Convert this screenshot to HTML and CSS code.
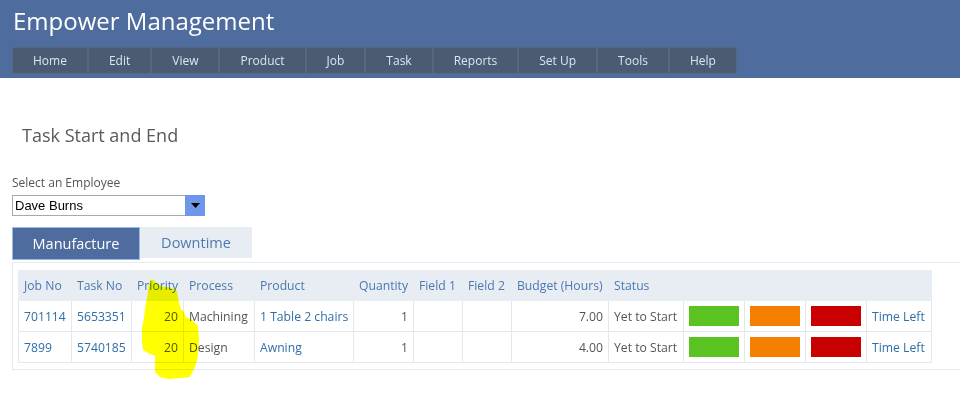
FILE: index.html
```html
<!DOCTYPE html>
<html>
<head>
<meta charset="utf-8">
<link rel="stylesheet" href="styles.css">
</head>
<body>
<header class="top">
  <h1 class="brand">Empower Management</h1>
  <nav class="menu">
    <a>Home</a><a>Edit</a><a>View</a><a>Product</a><a>Job</a><a>Task</a><a>Reports</a><a>Set Up</a><a>Tools</a><a>Help</a>
  </nav>
</header>
<main class="page">
  <h2 class="title">Task Start and End</h2>
  <label class="lbl">Select an Employee</label>
  <div class="select">
    <span class="sel-text">Dave Burns</span>
    <span class="sel-btn"><svg width="9" height="5" viewBox="0 0 9 5"><path d="M0 0h9L4.5 5z" fill="#000"/></svg></span>
  </div>
  <div class="tabs">
    <div class="tab active">Manufacture</div>
    <div class="tab">Downtime</div>
  </div>
  <div class="panel">
    <table class="grid">
      <colgroup>
        <col class="c53"><col class="c60"><col class="c52"><col class="c71"><col class="c99"><col class="c60"><col class="c49"><col class="c49"><col class="c97"><col class="c75"><col class="c61"><col class="c61"><col class="c61"><col class="c65">
      </colgroup>
      <thead>
        <tr><th>Job No</th><th>Task No</th><th>Priority</th><th>Process</th><th>Product</th><th>Quantity</th><th>Field 1</th><th>Field 2</th><th>Budget (Hours)</th><th>Status</th><th></th><th></th><th></th><th></th></tr>
      </thead>
      <tbody>
        <tr><td class="lnk">701114</td><td class="lnk">5653351</td><td class="num">20</td><td>Machining</td><td class="lnk">1 Table 2 chairs</td><td class="num">1</td><td></td><td></td><td class="num">7.00</td><td>Yet to Start</td><td><span class="blk green"></span></td><td><span class="blk orange"></span></td><td><span class="blk red"></span></td><td class="lnk">Time Left</td></tr>
        <tr><td class="lnk">7899</td><td class="lnk">5740185</td><td class="num">20</td><td>Design</td><td class="lnk">Awning</td><td class="num">1</td><td></td><td></td><td class="num">4.00</td><td>Yet to Start</td><td><span class="blk green"></span></td><td><span class="blk orange"></span></td><td><span class="blk red"></span></td><td class="lnk">Time Left</td></tr>
      </tbody>
    </table>
  </div>
</main>
<svg class="highlight" width="960" height="410" viewBox="0 0 960 410">
  <path d="M150 281 L152 279 L160 286 L172 288 L177 291 L179 303 L181 309 L184 312 L186 317 L192 320 L198 326 L199 340 L198 354 L196 364 L193 371 L190 377 L180 378 L168 379 L160 377 L155 372 L155 362 L155 356 L148 353 L143 350 L142 340 L142 327 L144 318 L145 308 L147 298 L148 290 Z" fill="#ffff00"/>
</svg>
</body>
</html>
```
FILE: styles.css
```css
html, body {
  margin: 0;
  padding: 0;
  background: #fff;
  overflow: hidden;
  font-family: "Open Sans", "Noto Sans", sans-serif;
}
.top {
  background: #4e6c9e;
  height: 78px;
  padding: 0 12px;
  box-sizing: border-box;
  overflow: hidden;
}
.brand {
  margin: 0;
  padding: 2px 0 0 1px;
  height: 45px;
  font-size: 24px;
  font-weight: 400;
  color: #fff;
  line-height: 38px;
}
.menu {
  display: inline-flex;
  background: #4a5b72;
  border: 1px solid #55687f;
  height: 25px;
}
.menu a {
  display: block;
  padding: 0 20px;
  line-height: 26px;
  font-size: 12px;
  color: #dce6f2;
  border-right: 2px solid #55687f;
}
.menu a:last-child { border-right: 0; }
.page {
  padding: 0 12px;
}
.title {
  margin: 0;
  padding: 44px 0 0 10px;
  height: 48px;
  font-size: 18px;
  font-weight: 400;
  color: #5a5a5a;
  line-height: 26px;
}
.lbl {
  display: block;
  margin-top: 5px;
  font-size: 12px;
  color: #555;
  line-height: 16px;
}
.select {
  display: flex;
  margin-top: 4px;
  width: 193px;
  height: 21px;
  box-sizing: border-box;
  border: 1px solid #a9a9a9;
}
.sel-text {
  flex: 1;
  font-family: "Liberation Sans", Arial, sans-serif;
  font-size: 13px;
  line-height: 19px;
  padding-left: 2px;
  color: #000;
}
.sel-btn {
  width: 20px;
  margin: -1px -1px -1px 0;
  background: #6f97e9;
  display: flex;
  align-items: center;
  justify-content: center;
}
.tabs {
  display: flex;
  align-items: flex-start;
  margin-top: 11px;
}
.tab {
  width: 112px;
  height: 31px;
  background: #e8edf4;
  color: #4e7bb0;
  font-size: 14.5px;
  line-height: 32px;
  text-align: center;
}
.tab.active {
  width: 128px;
  height: 33px;
  box-sizing: border-box;
  background: #4e6c9e;
  border: 1px solid #9db8ea;
  color: #fff;
  line-height: 32px;
}
.panel {
  margin-top: 2px;
  width: 1000px;
  border: 1px solid #e6ebf2;
  padding: 7px 5px 6px 5px;
}
.grid {
  border-collapse: collapse;
  table-layout: fixed;
  width: 913px;
  font-size: 12.2px;
}
.c53 { width: 53px; }
.c60 { width: 60px; }
.c52 { width: 52px; }
.c71 { width: 71px; }
.c99 { width: 99px; }
.c49 { width: 49px; }
.c97 { width: 97px; }
.c75 { width: 75px; }
.c61 { width: 61px; }
.c65 { width: 65px; }
.grid th {
  background: #e8edf4;
  color: #4a78b0;
  font-weight: 400;
  text-align: left;
  height: 29px;
  padding: 0 5px;
  white-space: nowrap;
  border: 1px solid #e8edf4;
}
.grid td {
  height: 30px;
  padding: 0 5px;
  border: 1px solid #e3e8ef;
  color: #555;
  white-space: nowrap;
}
.grid td.lnk { color: #2f6fa8; }
.grid td.num { text-align: right; }
.blk {
  display: block;
  width: 50px;
  height: 20px;
}
.green { background: #5ac322; }
.orange { background: #f57f00; }
.red { background: #c80000; }
.highlight {
  position: absolute;
  left: 0;
  top: 0;
  mix-blend-mode: multiply;
  pointer-events: none;
}
```
